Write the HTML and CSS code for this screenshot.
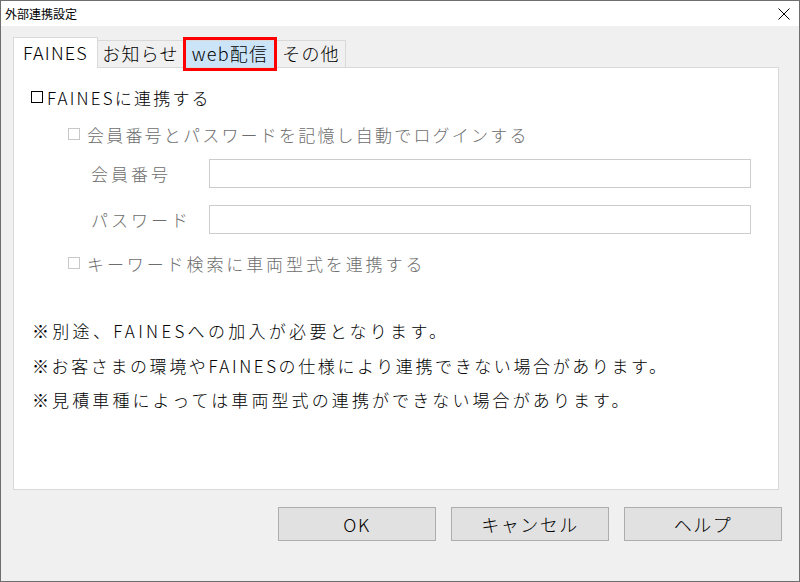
FILE: index.html
```html
<!DOCTYPE html>
<html lang="ja">
<head>
<meta charset="utf-8">
<title>外部連携設定</title>
<link rel="stylesheet" href="styles.css">
</head>
<body>
<div class="window">
  <div class="titlebar">
    <span class="title">外部連携設定</span>
    <svg class="close" width="12" height="12" viewBox="0 0 12 12"><path d="M0.5 0.5 L11.5 11.5 M11.5 0.5 L0.5 11.5" stroke="#000" stroke-width="1" fill="none"/></svg>
  </div>
  <div class="client">
    <div class="tabs">
      <div class="tab tab-active t-faines">FAINES</div>
      <div class="tab t-info">お知らせ</div>
      <div class="tab tab-hl t-web">web配信</div>
      <div class="tab t-other">その他</div>
    </div>
    <div class="panel">
      <div class="check main"><span class="box"></span>FAINESに連携する</div>
      <div class="check sub first-sub"><span class="box"></span>会員番号とパスワードを記憶し自動でログインする</div>
      <div class="field field-1"><span class="label">会員番号</span><span class="input"></span></div>
      <div class="field field-2"><span class="label">パスワード</span><span class="input"></span></div>
      <div class="check sub last-sub"><span class="box"></span>キーワード検索に車両型式を連携する</div>
      <div class="notes">
        <p class="note-1">※別途、FAINESへの加入が必要となります。</p>
        <p class="note-2">※お客さまの環境やFAINESの仕様により連携できない場合があります。</p>
        <p class="note-3">※見積車種によっては車両型式の連携ができない場合があります。</p>
      </div>
    </div>
    <div class="buttons">
      <button class="btn">OK</button>
      <button class="btn">キャンセル</button>
      <button class="btn">ヘルプ</button>
    </div>
  </div>
</div>
</body>
</html>
```
FILE: styles.css
```css
html, body {
  margin: 0;
  padding: 0;
  width: 800px;
  height: 582px;
  overflow: hidden;
  background: #f0f0f0;
}
body {
  font-family: "Noto Sans CJK JP", "Noto Sans", sans-serif;
  font-weight: 300;
  color: #000;
}
.window {
  box-sizing: border-box;
  width: 800px;
  height: 582px;
  border: 1px solid #6e6e6e;
  display: flex;
  flex-direction: column;
  background: #f0f0f0;
}
.titlebar {
  height: 25px;
  flex: none;
  background: #fff;
  display: flex;
  align-items: center;
  justify-content: space-between;
  padding: 0 9px 0 4px;
}
.title {
  font-size: 12px;
  line-height: 14px;
  color: #000;
  font-weight: 400;
}
.close {
  display: block;
}
.client {
  flex: 1;
  display: flex;
  flex-direction: column;
  padding: 11px 20px 0 12px;
}
.tabs {
  display: flex;
  align-items: flex-end;
  height: 30px;
}
.tab {
  box-sizing: border-box;
  height: 27px;
  border: 1px solid #d9d9d9;
  border-bottom: none;
  background: #f0f0f0;
  font-size: 18px;
  line-height: 25px;
  text-align: center;
  margin-left: -1px;
  letter-spacing: 1.2px;
  position: relative;
}
.tab-active {
  height: 31px;
  margin-left: 0;
  margin-bottom: -1px;
  background: #fff;
  z-index: 2;
  line-height: 28px;
}
.t-faines { width: 85px; }
.t-info { width: 87px; }
.t-web { width: 94px; background: #cce4f7; }
.t-other { width: 70px; }
.tab-hl::after {
  content: "";
  position: absolute;
  left: -1px;
  top: -4px;
  right: -1px;
  bottom: -4px;
  border: 3px solid #ff0000;
  z-index: 3;
}
.panel {
  box-sizing: border-box;
  height: 423px;
  flex: none;
  background: #fff;
  border: 1px solid #d9d9d9;
  padding: 17px 27px 0 16px;
  display: flex;
  flex-direction: column;
  position: relative;
  z-index: 1;
}
.check {
  display: flex;
  align-items: center;
  height: 24px;
  font-size: 17px;
  letter-spacing: 2px;
  white-space: nowrap;
}
.box {
  box-sizing: border-box;
  flex: none;
  width: 12px;
  height: 12px;
  border: 1px solid #000;
}
.main .box {
  margin-left: 1px;
  margin-right: 4px;
}
.main {
  letter-spacing: 2.2px;
}
.sub {
  margin-left: 38px;
  color: #6d6d6d;
}
.sub .box {
  border-color: #c8c8c8;
  margin-right: 7px;
}
.first-sub {
  margin-top: 13px;
  letter-spacing: 2.2px;
}
.last-sub {
  margin-top: 17px;
  letter-spacing: 2.9px;
}
.field {
  display: flex;
  align-items: center;
  height: 29px;
  margin-left: 61px;
}
.field-1 { margin-top: 13px; }
.field-2 { margin-top: 17px; }
.label {
  width: 118px;
  flex: none;
  font-size: 17px;
  letter-spacing: 3px;
  color: #6d6d6d;
}
.input {
  flex: 1;
  height: 29px;
  box-sizing: border-box;
  border: 1px solid #cccccc;
  background: #fff;
}
.notes {
  margin-top: 39px;
  margin-left: 2px;
  font-size: 17px;
  white-space: nowrap;
}
.notes p {
  margin: 0;
  line-height: 34.5px;
}
.note-1 { letter-spacing: 3.3px; }
.note-2 { letter-spacing: 2.6px; }
.note-3 { letter-spacing: 3.1px; }
.buttons {
  display: flex;
  justify-content: flex-end;
  gap: 15px;
  margin-top: 17px;
  margin-right: -3px;
}
.btn {
  box-sizing: border-box;
  width: 158px;
  height: 34px;
  background: #e1e1e1;
  border: 1px solid #adadad;
  font-family: "Noto Sans CJK JP", "Noto Sans", sans-serif;
  font-weight: 300;
  font-size: 18px;
  color: #000;
  padding: 0;
  letter-spacing: 1.5px;
}
```
